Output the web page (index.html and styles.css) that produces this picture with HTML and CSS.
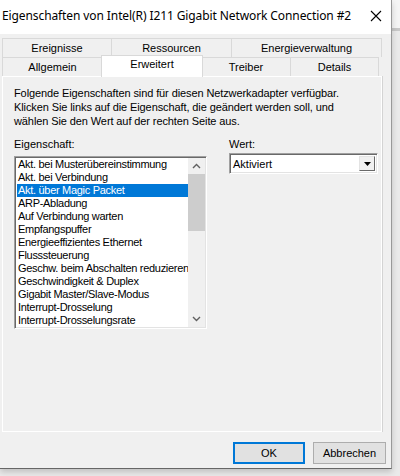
FILE: index.html
```html
<!DOCTYPE html>
<html lang="de">

<head>
  <meta charset="UTF-8" />
  <title>Eigenschaften von Intel(R) I211 Gigabit Network Connection #2</title>
  <link rel="stylesheet" href="styles.css">
</head>

<body>

  <div class="fenster">
    <div class="titelleiste">
      <span class="titel">Eigenschaften von Intel(R) I211 Gigabit Network Connection #2</span>
      <svg class="schliessen" width="12" height="12" viewBox="0 0 12 12">
        <path d="M1 1 L11 11 M11 1 L1 11" stroke="#000" stroke-width="1.1" fill="none" />
      </svg>
    </div>

    <div class="dialog">
      <!-- Registerkarten, zwei Reihen -->
      <div class="reiter-reihe">
        <div class="reiter" style="width:110px">Ereignisse</div>
        <div class="reiter" style="width:121px">Ressourcen</div>
        <div class="reiter" style="width:151px">Energieverwaltung</div>
      </div>
      <div class="reiter-reihe">
        <div class="reiter" style="width:101px">Allgemein</div>
        <div class="reiter aktiv" style="width:102px">Erweitert</div>
        <div class="reiter" style="width:90px">Treiber</div>
        <div class="reiter" style="width:89px">Details</div>
      </div>

      <div class="seite">
        <p class="hinweis">
          Folgende Eigenschaften sind für diesen Netzwerkadapter verfügbar.<br>
          Klicken Sie links auf die Eigenschaft, die geändert werden soll, und<br>
          wählen Sie den Wert auf der rechten Seite aus.
        </p>

        <div class="spalten">
          <div class="spalte-links">
            <div class="beschriftung">Eigenschaft:</div>
            <div class="liste">
              <div class="eintraege" id="eintraege"></div>
              <div class="scrollleiste">
                <div class="pfeil">
                  <svg width="9" height="6" viewBox="0 0 9 6"><path d="M1 5 L4.5 1.5 L8 5" stroke="#606060" stroke-width="1.4" fill="none" /></svg>
                </div>
                <div class="schiene">
                  <div class="daumen"></div>
                </div>
                <div class="pfeil">
                  <svg width="9" height="6" viewBox="0 0 9 6"><path d="M1 1 L4.5 4.5 L8 1" stroke="#606060" stroke-width="1.4" fill="none" /></svg>
                </div>
              </div>
            </div>
          </div>

          <div class="spalte-rechts">
            <div class="beschriftung">Wert:</div>
            <div class="auswahl">
              <span class="auswahl-text">Aktiviert</span>
              <div class="auswahl-knopf">
                <svg width="7" height="4" viewBox="0 0 7 4"><path d="M0 0 H7 L3.5 4 Z" fill="#000" /></svg>
              </div>
            </div>
          </div>
        </div>
      </div>

      <div class="knoepfe">
        <button class="knopf standard">OK</button>
        <button class="knopf">Abbrechen</button>
      </div>
    </div>
  </div>

  <script>
    // Eigenschaften des Adapters in die Liste schreiben
    const eigenschaften = [
      "Akt. bei Musterübereinstimmung",
      "Akt. bei Verbindung",
      "Akt. über Magic Packet",
      "ARP-Abladung",
      "Auf Verbindung warten",
      "Empfangspuffer",
      "Energieeffizientes Ethernet",
      "Flusssteuerung",
      "Geschw. beim Abschalten reduzieren",
      "Geschwindigkeit & Duplex",
      "Gigabit Master/Slave-Modus",
      "Interrupt-Drosselung",
      "Interrupt-Drosselungsrate"
    ]

    const liste = document.getElementById("eintraege")
    eigenschaften.forEach((name, i) => {
      const div = document.createElement("div")
      div.classList.add("eintrag")
      if (i === 2) div.classList.add("gewaehlt")
      div.innerText = name
      liste.appendChild(div)
    })
  </script>

</body>

</html>
```

FILE: styles.css
```css
body {
  margin: 0;
  width: 400px;
  height: 476px;
  overflow: hidden;
  background: linear-gradient(to bottom, #f5f5f5 0, #f5f5f5 28px, #c8c8c8 28px, #c8c8c8 31px, #eaeaea 31px);
  font-family: "Liberation Sans", Arial, sans-serif;
  font-size: 11px;
  color: #000;
}

.fenster {
  width: 391px;
  height: 468px;
  background: #f0f0f0;
  border-right: 1px solid #999;
  border-bottom: 1px solid #666;
  box-shadow: 0 3px 6px rgba(0, 0, 0, 0.18);
  display: flex;
  flex-direction: column;
}

.titelleiste {
  height: 30px;
  background: #fff;
  display: flex;
  align-items: center;
  justify-content: space-between;
  padding: 0 9px 4px 2px;
}

.titel {
  font-family: "Noto Sans", "Open Sans", sans-serif;
  font-size: 12px;
  letter-spacing: -0.1px;
  color: #000;
}

.schliessen {
  margin-top: 2px;
}

.dialog {
  flex: 1;
  padding: 4px 0 0 2px;
  display: flex;
  flex-direction: column;
}

/* Registerkarten */
.reiter-reihe {
  display: flex;
  height: 19px;
}

.reiter {
  box-sizing: border-box;
  height: 19px;
  border: 1px solid #d9d9d9;
  border-bottom: none;
  margin-right: -1px;
  background: #f0f0f0;
  text-align: center;
  line-height: 18px;
}

.reiter.aktiv {
  position: relative;
  z-index: 1;
  height: 22px;
  margin-top: -2px;
  margin-left: -1px;
  margin-right: -2px;
  width: 103px;
  background: #fff;
  line-height: 17px;
}

.seite {
  width: 380px;
  height: 356px;
  box-sizing: border-box;
  border: 1px solid #fff;
  box-shadow: 1px 0 0 #d4d4d4;
  padding: 9px 0 0 11px;
}

.hinweis {
  margin: 0;
  line-height: 14px;
  letter-spacing: -0.1px;
}

.spalten {
  display: flex;
  margin-top: 9px;
  gap: 22px;
}

.beschriftung {
  height: 14px;
  line-height: 14px;
}

/* Liste links */
.liste {
  margin-top: 5px;
  width: 193px;
  height: 173px;
  box-sizing: border-box;
  border-top: 1px solid #a0a0a0;
  border-left: 1px solid #a0a0a0;
  border-right: 1px solid #fff;
  border-bottom: 1px solid #fff;
  box-shadow: inset 1px 1px 0 #696969, inset -1px -1px 0 #e3e3e3;
  background: #fff;
  padding: 1px;
  display: flex;
}

.eintraege {
  flex: 1;
  overflow: hidden;
  padding-left: 1px;
}

.eintrag {
  height: 13px;
  line-height: 12px;
  padding-left: 1px;
  white-space: nowrap;
  letter-spacing: -0.3px;
}

.gewaehlt {
  background: #0078d7;
  color: #fff;
}

.scrollleiste {
  width: 17px;
  background: #f0f0f0;
  display: flex;
  flex-direction: column;
}

.pfeil {
  height: 16px;
  display: flex;
  align-items: center;
  justify-content: center;
}

.schiene {
  flex: 1;
}

.daumen {
  height: 57px;
  background: #cdcdcd;
}

/* Auswahlfeld rechts */
.auswahl {
  margin-top: 2px;
  width: 149px;
  height: 21px;
  box-sizing: border-box;
  border-top: 1px solid #a0a0a0;
  border-left: 1px solid #a0a0a0;
  border-right: 1px solid #fff;
  border-bottom: 1px solid #fff;
  box-shadow: inset 1px 1px 0 #696969, inset -1px -1px 0 #e3e3e3;
  background: #fff;
  display: flex;
  align-items: center;
  padding: 2px;
}

.auswahl-text {
  flex: 1;
  padding-left: 1px;
}

.auswahl-knopf {
  width: 16px;
  height: 15px;
  box-sizing: border-box;
  background: #f0f0f0;
  border-top: 1px solid #e3e3e3;
  border-left: 1px solid #e3e3e3;
  border-right: 1px solid #696969;
  border-bottom: 1px solid #696969;
  display: flex;
  align-items: center;
  justify-content: center;
}

/* Knöpfe unten */
.knoepfe {
  display: flex;
  justify-content: flex-end;
  gap: 8px;
  padding: 10px 5px 0 0;
}

.knopf {
  box-sizing: border-box;
  height: 22px;
  width: 73px;
  padding: 0;
  background: #e1e1e1;
  border: 1px solid #adadad;
  font-family: "Liberation Sans", Arial, sans-serif;
  font-size: 11px;
  color: #000;
}

.knopf.standard {
  width: 72px;
  border: 2px solid #0078d7;
}
```
